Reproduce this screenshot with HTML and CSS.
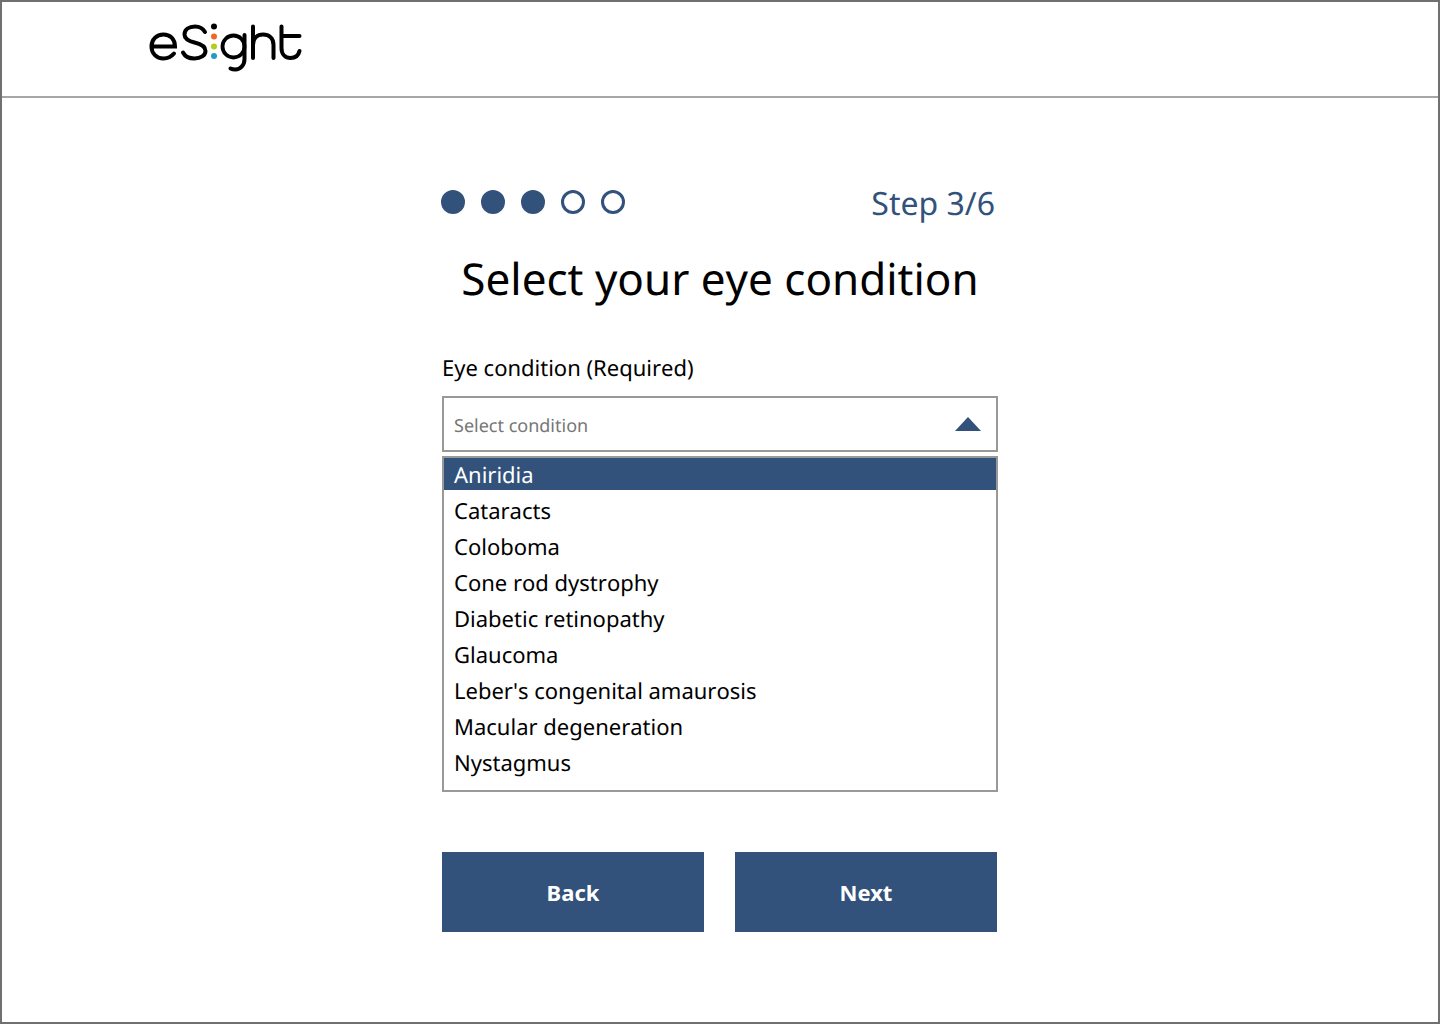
FILE: index.html
```html
<!DOCTYPE html>
<html lang="en">
<head>
    <meta charset="UTF-8" />
    <meta name="viewport" content="width=device-width, initial-scale=1.0">
    <title>Select your eye condition</title>
    <link rel="stylesheet" href="styles.css">
</head>
<body>

<div class="page">
    <header class="top-bar">
        <svg class="logo" width="160" height="56" viewBox="148 20 160 56" role="img" aria-label="eSight">
            <g fill="none" stroke="#000" stroke-width="4" stroke-linecap="round">
                <path d="M152 46.500H175C175 39 170 34.500 163.500 34.500C156.500 34.500 151.500 39.500 151.500 46.500C151.500 53.500 156.500 58.500 163.500 58.500C168 58.500 171.500 56.500 174 53.500" />
                <path d="M205 32C203 28.500 199.500 26.500 195 26.500C189 26.500 184.500 29.500 184.500 34.500C184.500 39 188.500 41 194.500 42.500C201 44 205.500 46 205.500 51C205.500 55.500 200.500 58.500 194.500 58.500C189 58.500 185 56.500 183 52.500" />
                <circle cx="233.500" cy="46.500" r="11" stroke-width="3.800" />
                <path d="M244.500 35V59C244.500 65.500 240 69.500 235.500 69.500C233.500 69.500 232 69.300 230.500 68.500" />
                <path d="M253 26.500V58M253 45C253 38 257.500 34.500 263 34.500C269 34.500 273.500 38 273.500 45V58" />
                <path d="M281.500 26.500V48C281.500 54.500 285.500 58 290.500 58C295 58 298.500 55.500 299.500 51M281.500 36H299.500" />
            </g>
            <circle cx="214" cy="26.500" r="3" fill="#000" />
            <circle cx="214" cy="36.500" r="3" fill="#f26522" />
            <circle cx="214" cy="46.500" r="3" fill="#b5cc18" />
            <circle cx="214" cy="56" r="3" fill="#1f9bc4" />
        </svg>
    </header>

    <main class="content">
        <div class="step-row">
            <div class="dots">
                <span class="dot filled"></span>
                <span class="dot filled"></span>
                <span class="dot filled"></span>
                <span class="dot"></span>
                <span class="dot"></span>
            </div>
            <span class="step-text">Step 3/6</span>
        </div>

        <h1>Select your eye condition</h1>

        <label class="field-label">Eye condition (Required)</label>
        <div class="select-box">
            <span class="placeholder">Select condition</span>
            <span class="arrow-up"></span>
        </div>

        <ul class="options">
            <li class="active">Aniridia</li>
            <li>Cataracts</li>
            <li>Coloboma</li>
            <li>Cone rod dystrophy</li>
            <li>Diabetic retinopathy</li>
            <li>Glaucoma</li>
            <li>Leber's congenital amaurosis</li>
            <li>Macular degeneration</li>
            <li>Nystagmus</li>
        </ul>

        <div class="buttons">
            <button class="btn">Back</button>
            <button class="btn">Next</button>
        </div>
    </main>
</div>

</body>
</html>
```

FILE: styles.css
```css
* {
    box-sizing: border-box;
}

body {
    margin: 0;
    font-family: "Noto Sans", Arial, sans-serif;
    background-color: #fff;
    color: #000;
    text-rendering: geometricPrecision;
    font-kerning: none;
}

.page {
    width: 1440px;
    height: 1024px;
    border: 2px solid #707070;
}

.top-bar {
    height: 96px;
    padding: 18px 0 0 146px;
    border-bottom: 2px solid #a6a6a6;
}

.logo {
    display: block;
}

.content {
    width: 556px;
    margin: 0 auto;
    padding-top: 86px;
}

.step-row {
    display: flex;
    justify-content: space-between;
    align-items: center;
    height: 36px;
}

.dots {
    display: flex;
    gap: 16px;
    margin-left: -1px;
}

.dot {
    width: 24px;
    height: 24px;
    border: 3px solid #32527b;
    border-radius: 50%;
}

.dot.filled {
    background-color: #32527b;
}

.step-text {
    margin: 4px 3px 0 0;
    font-size: 32px;
    line-height: 36px;
    color: #32527b;
}

h1 {
    margin: 28px 0 0;
    font-size: 44px;
    font-weight: 400;
    line-height: 60px;
    text-align: center;
}

.field-label {
    display: block;
    margin-top: 45px;
    font-size: 22px;
    line-height: 30px;
}

.select-box {
    display: flex;
    justify-content: space-between;
    align-items: center;
    height: 56px;
    margin-top: 13px;
    padding: 0 15px 0 10px;
    border: 2px solid #999;
}

.placeholder {
    padding-top: 4px;
    font-size: 18px;
    color: #767676;
}

.arrow-up {
    width: 0;
    height: 0;
    border-left: 13.500px solid transparent;
    border-right: 13.500px solid transparent;
    border-bottom: 14px solid #32527b;
}

.options {
    list-style: none;
    height: 336px;
    margin: 4px 0 0;
    padding: 0;
    border: 2px solid #999;
}

.options li {
    height: 32px;
    margin-bottom: 4px;
    padding-left: 10px;
    font-size: 22px;
    line-height: 34px;
}

.options li.active {
    background-color: #32527b;
    color: #fff;
}

.buttons {
    display: flex;
    justify-content: space-between;
    width: 555px;
    margin-top: 60px;
}

.btn {
    width: 262px;
    height: 80px;
    border: none;
    background-color: #32527b;
    color: #fff;
    font-family: inherit;
    font-size: 22px;
    font-weight: 700;
    cursor: pointer;
}
```
